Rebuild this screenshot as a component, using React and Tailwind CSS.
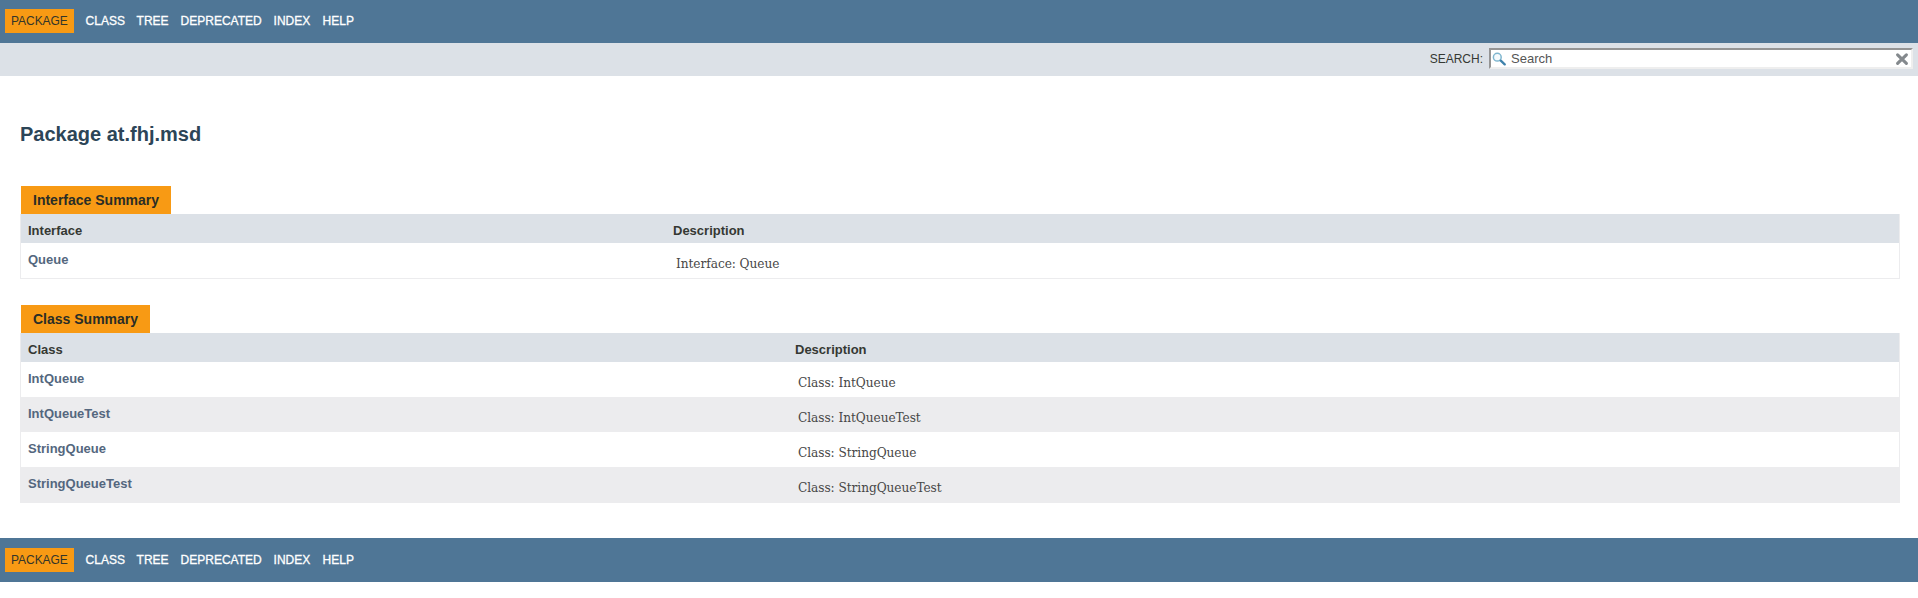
const LINKS = [
  { label: "CLASS", cls: "w-[51px]" },
  { label: "TREE", cls: "w-[44px]" },
  { label: "DEPRECATED", cls: "w-[93px]" },
  { label: "INDEX", cls: "w-[49px]" },
  { label: "HELP", cls: "w-[44px]" },
];

function NavBar({ className }) {
  return (
    <nav className={`flex items-start bg-[#4f7696] pl-[5px] text-[12px] leading-[14px] text-white ${className}`}>
      <span className="mr-[11.6px] h-6 w-[69px] bg-[#f89a14] pt-[5px] pl-[6px] tracking-[-0.05px] text-[#33352a]">PACKAGE</span>
      {LINKS.map((l) => (
        <a key={l.label} className={`pt-[5px] [-webkit-text-stroke:0.3px_white] ${l.cls}`}>
          {l.label}
        </a>
      ))}
    </nav>
  );
}

function SearchBar() {
  return (
    <div className="flex h-[33px] items-start justify-end bg-[#dce1e7] pt-[5px] pr-[5px] text-[#353833]">
      <label className="mr-[6px] pt-[4px] text-[12px] leading-[14px]">SEARCH:</label>
      <div className="flex h-[21px] w-[424px] items-center border-2 border-t-[#949494] border-r-[#eeeeee] border-b-[#eeeeee] border-l-[#949494] bg-white pr-[2px] pl-px">
        <svg className="mr-[5px] h-[14px] w-[14px] shrink-0" viewBox="0 0 14 14" fill="none">
          <circle cx="5.3" cy="5.2" r="3.9" stroke="#7fb6cf" strokeWidth="1.5" fill="#f4fafd" />
          <path d="M8.8 8.7 12.7 12.4" stroke="#3f82ab" strokeWidth="2.3" strokeLinecap="round" />
        </svg>
        <span className="grow text-[13px] leading-[15px] text-[#555]">Search</span>
        <svg className="h-[14px] w-[14px] shrink-0" viewBox="0 0 14 14">
          <path d="M2.6 2.8 11.4 11.4M11.4 2.8 2.6 11.4" stroke="#84898d" strokeWidth="3.1" strokeLinecap="round" />
        </svg>
      </div>
    </div>
  );
}

function Summary({ caption, captionCls, heading, firstCls, rows, className }) {
  return (
    <section className={`mr-[18px] ml-[20px] ${className}`}>
      <h2 className={`ml-px h-7 bg-[#f89a14] pt-[6px] pl-[12px] text-[14px] leading-[16px] font-bold text-[#2a2d26] ${captionCls}`}>
        {caption}
      </h2>
      <div className="border-x border-b border-[#ececee] text-[13px] leading-[15px] font-bold">
        <div className="flex h-[29px] bg-[#dce1e7] pt-[9px] pl-[7px] text-[#353833]">
          <div className={`shrink-0 ${firstCls}`}>{heading}</div>
          <div>Description</div>
        </div>
        {rows.map(([name, desc]) => (
          <div key={name} className="flex h-[35px] pt-[9px] pl-[7px] even:bg-white odd:bg-[#ececee]">
            <a className={`shrink-0 text-[#54677e] ${firstCls}`}>{name}</a>
            <div className="pt-[3px] pl-[3px] font-['DejaVu_Serif_Condensed','DejaVu_Serif',serif] text-[13.5px] leading-[17px] font-normal tracking-[-0.05px] text-[#474747]">
              {desc}
            </div>
          </div>
        ))}
      </div>
    </section>
  );
}

export default function App() {
  return (
    <div className="h-[598px] overflow-hidden bg-white font-['Liberation_Sans',Arial,sans-serif]">
      <NavBar className="h-[43px] pt-[9px]" />
      <SearchBar />
      <h1 className="mt-[47px] mb-[40px] ml-[20px] text-[20px] leading-[23px] font-bold text-[#2c4557]">Package at.fhj.msd</h1>
      <Summary
        caption="Interface Summary"
        captionCls="w-[150px]"
        heading="Interface"
        firstCls="w-[645px]"
        rows={[["Queue", "Interface: Queue"]]}
      />
      <Summary
        className="mt-[26px]"
        caption="Class Summary"
        captionCls="w-[129px]"
        heading="Class"
        firstCls="w-[767px]"
        rows={[
          ["IntQueue", "Class: IntQueue"],
          ["IntQueueTest", "Class: IntQueueTest"],
          ["StringQueue", "Class: StringQueue"],
          ["StringQueueTest", "Class: StringQueueTest"],
        ]}
      />
      <NavBar className="mt-[35px] h-[44px] pt-[10px]" />
    </div>
  );
}
